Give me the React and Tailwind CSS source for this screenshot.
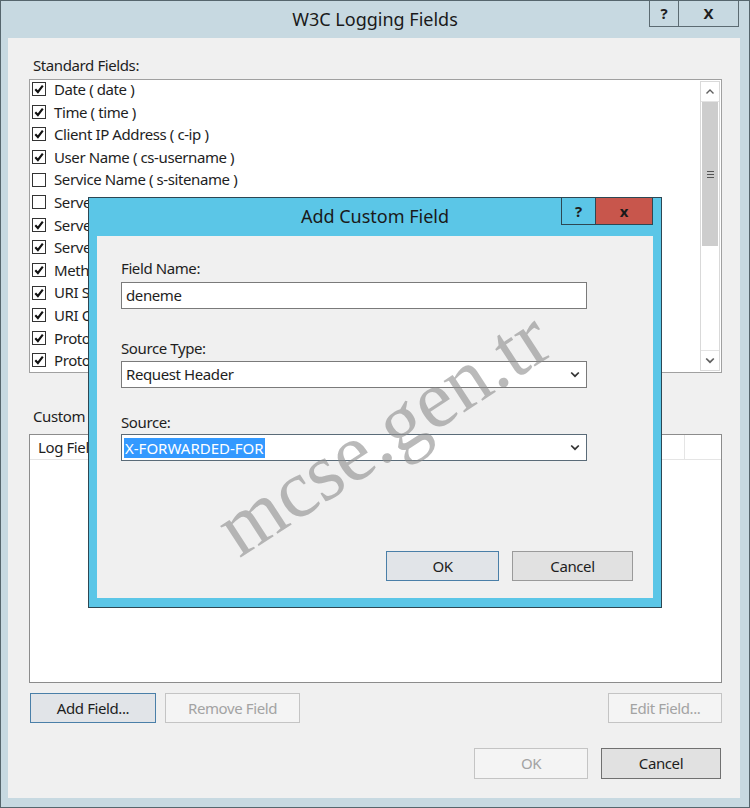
const standardFields = [
  ["Date ( date )", true],
  ["Time ( time )", true],
  ["Client IP Address ( c-ip )", true],
  ["User Name ( cs-username )", true],
  ["Service Name ( s-sitename )", false],
  ["Server Name ( s-computername )", false],
  ["Server IP Address ( s-ip )", true],
  ["Server Port ( s-port )", true],
  ["Method ( cs-method )", true],
  ["URI Stem ( cs-uri-stem )", true],
  ["URI Query ( cs-uri-query )", true],
  ["Protocol Status ( sc-status )", true],
  ["Protocol Substatus ( sc-substatus )", true],
];

function Check({ checked }) {
  return (
    <span className="w-[14px] h-[14px] border border-[#333333] bg-white flex items-center justify-center shrink-0">
      {checked && (
        <svg width="10" height="10" viewBox="0 0 10 10">
          <path d="M1.3 5.2 L3.9 8 L8.8 1.6" fill="none" stroke="#111" strokeWidth="2.1" />
        </svg>
      )}
    </span>
  );
}

function ChevronDown({ color = "#333" }) {
  return (
    <svg width="10" height="7" viewBox="0 0 10 7">
      <path d="M1.2 1.5 L5 5.2 L8.8 1.5" fill="none" stroke={color} strokeWidth="1.7" />
    </svg>
  );
}

function ChevronUp() {
  return (
    <svg width="10" height="7" viewBox="0 0 10 7">
      <path d="M1.5 5.5 L5 2 L8.5 5.5" fill="none" stroke="#606060" strokeWidth="1.4" />
    </svg>
  );
}

function Button({ children, className = "", disabled, focused }) {
  const tone = disabled
    ? "bg-[#f4f4f4] border-[#c4c4c4] text-[#a3a3a3]"
    : focused
      ? "bg-[#e1e4e8] border-[#4a7fa8] text-[#1e1e1e]"
      : "bg-[#e1e1e1] border-[#9a9a9a] text-[#1e1e1e]";
  return (
    <div className={`border flex items-center justify-center text-[15px] tracking-[-0.4px] ${tone} ${className}`}>
      {children}
    </div>
  );
}

function Dialog() {
  return (
    <div className="absolute left-[87px] top-[196px] w-[574px] h-[411px] bg-[#5bc6e7] border border-[#2d4753] flex flex-col px-[8px] pb-[9px]">
      <div className="h-[38px] grid grid-cols-[1fr_auto_1fr] shrink-0">
        <div />
        <div className="self-center text-[18px] text-[#1a1a1a] pb-[2px]">Add Custom Field</div>
        <div className="flex justify-end items-start">
          <div className="w-[35px] h-[27px] border border-t-0 border-[#2d4753] flex items-center justify-center font-bold text-[15px]">?</div>
          <div className="w-[57px] h-[27px] border border-t-0 border-l-0 border-[#2d4753] bg-[#c8564c] flex items-center justify-center font-bold text-[15px] text-[#1a1a1a]">x</div>
        </div>
      </div>
      <div className="flex-1 bg-[#f0f0f0] pl-[24px] pr-[20px] pt-[23px] flex flex-col text-[15px] tracking-[-0.4px]">
        <div className="h-[18px] leading-[18px]">Field Name:</div>
        <div className="mt-[5px] w-[466px] h-[27px] bg-white border border-[#7a7a7a] flex items-center px-[4px]">deneme</div>
        <div className="mt-[30px] h-[18px] leading-[18px]">Source Type:</div>
        <div className="mt-[4px] w-[466px] h-[27px] bg-white border border-[#7a7a7a] flex items-center justify-between pl-[4px] pr-[6px]">
          <span>Request Header</span>
          <ChevronDown />
        </div>
        <div className="mt-[25px] h-[18px] leading-[18px]">Source:</div>
        <div className="mt-[3px] w-[466px] h-[27px] bg-white border border-[#5a6b78] flex items-center justify-between pl-[2px] pr-[6px]">
          <span className="bg-[#3399ff] text-white px-[1px] leading-[20px] tracking-normal">X-FORWARDED-FOR</span>
          <ChevronDown />
        </div>
        <div className="mt-[90px] flex justify-end gap-[13px]">
          <Button focused className="w-[113px] h-[30px]">OK</Button>
          <Button className="w-[121px] h-[30px] border-[#8a8a8a]">Cancel</Button>
        </div>
      </div>
    </div>
  );
}

export default function App() {
  return (
    <div className="w-[750px] h-[808px] relative overflow-hidden bg-[#c7d9e1] border border-[#56666d] font-['Noto_Sans',sans-serif] text-[#1e1e1e]">
      <div className="h-[37px] grid grid-cols-[1fr_auto_1fr]">
        <div />
        <div className="self-center text-[18px] text-[#1a1a1a]">W3C Logging Fields</div>
        <div className="flex justify-end items-start pr-[10px]">
          <div className="w-[30px] h-[26px] border border-t-0 border-[#5c6b72] flex items-center justify-center font-bold text-[15px]">?</div>
          <div className="w-[60px] h-[26px] border border-t-0 border-l-0 border-[#5c6b72] flex items-center justify-center font-bold text-[15px]">X</div>
        </div>
      </div>

      <div className="ml-[7px] mr-[9px] h-[760px] bg-[#f0f0f0] pl-[21px] pr-[18px] pt-[18px] flex flex-col text-[15px] tracking-[-0.4px]">
        <div className="h-[18px] leading-[18px] pl-[4px]">Standard Fields:</div>
        <div className="mt-[5px] h-[294px] bg-white border border-[#a0a0a0] flex">
          <div className="flex-1 flex flex-col pl-[2px] -mt-[2px] overflow-hidden">
            {standardFields.map(([label, checked]) => (
              <div key={label} className="h-[22.6px] flex items-center gap-[8px] shrink-0 whitespace-nowrap">
                <Check checked={checked} />
                <span>{label}</span>
              </div>
            ))}
          </div>
          <div className="w-[20px] flex flex-col my-[1px] mr-[1px] border border-[#d9d9d9] bg-white">
            <div className="h-[20px] flex items-center justify-center border-b border-[#e3e3e3]">
              <ChevronUp />
            </div>
            <div className="h-[144px] bg-[#cdcdcd] flex items-center justify-center mx-[1px]">
              <div className="flex flex-col gap-[2px]">
                <span className="w-[7px] h-[1px] bg-[#555]" />
                <span className="w-[7px] h-[1px] bg-[#555]" />
                <span className="w-[7px] h-[1px] bg-[#555]" />
              </div>
            </div>
            <div className="flex-1" />
            <div className="h-[20px] flex items-center justify-center border-t border-[#e3e3e3]">
              <ChevronDown color="#606060" />
            </div>
          </div>
        </div>

        <div className="mt-[34px] h-[18px] leading-[18px] pl-[4px]">Custom Fields:</div>
        <div className="mt-[9px] h-[249px] bg-white border border-[#8c8c8c] flex flex-col">
          <div className="h-[25px] flex border-b border-[#e5e5e5]">
            <div className="flex-1 flex items-center pl-[8px] border-r border-[#e5e5e5]">Log Field</div>
            <div className="w-[36px]" />
          </div>
        </div>

        <div className="mt-[10px] flex gap-[9px] pl-[1px]">
          <Button focused className="w-[126px] h-[30px]">Add Field...</Button>
          <Button disabled className="w-[135px] h-[30px]">Remove Field</Button>
          <div className="flex-1" />
          <Button disabled className="w-[114px] h-[30px]">Edit Field...</Button>
        </div>

        <div className="mt-[25px] flex justify-end gap-[13px] pr-[1px]">
          <Button disabled className="w-[114px] h-[31px]">OK</Button>
          <Button className="w-[120px] h-[31px] border-[#707070]">Cancel</Button>
        </div>
      </div>

      <Dialog />

      <div className="absolute left-[382px] top-[432px] -translate-x-1/2 -translate-y-1/2 rotate-[-33deg] font-['Liberation_Serif',serif] text-[82px] leading-none text-[#8c8c8c]/60 whitespace-nowrap pointer-events-none">
        mcse.gen.tr
      </div>
    </div>
  );
}
